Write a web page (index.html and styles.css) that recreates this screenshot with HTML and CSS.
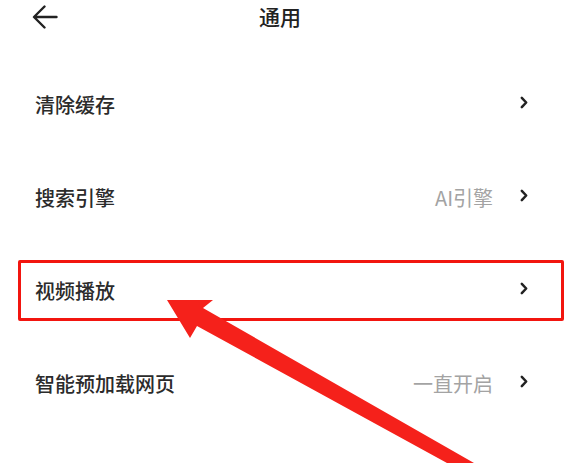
FILE: index.html
```html
<!DOCTYPE html>
<html lang="zh-CN">
<head>
<meta charset="utf-8">
<title>通用</title>
<link rel="stylesheet" href="styles.css">
</head>
<body>
<div class="page">
  <header class="header">
    <svg class="back" width="26" height="24" viewBox="0 0 26 24">
      <path d="M24.5 12H2.5M12.5 1.5L2 12l10.5 10.5" fill="none" stroke="#222" stroke-width="2.4" stroke-linecap="round" stroke-linejoin="round"/>
    </svg>
    <h1 class="title">通用</h1>
  </header>
  <ul class="list">
    <li class="row">
      <span class="label">清除缓存</span>
      <span class="right">
        <svg class="chev" width="8" height="13" viewBox="0 0 8 13"><path d="M1.8 1.8L6.2 6.5 1.8 11.2" fill="none" stroke="#222" stroke-width="2.5" stroke-linecap="round" stroke-linejoin="round"/></svg>
      </span>
    </li>
    <li class="row">
      <span class="label">搜索引擎</span>
      <span class="right">
        <span class="value">AI引擎</span>
        <svg class="chev" width="8" height="13" viewBox="0 0 8 13"><path d="M1.8 1.8L6.2 6.5 1.8 11.2" fill="none" stroke="#222" stroke-width="2.5" stroke-linecap="round" stroke-linejoin="round"/></svg>
      </span>
    </li>
    <li class="row highlighted">
      <span class="label">视频播放</span>
      <span class="right">
        <svg class="chev" width="8" height="13" viewBox="0 0 8 13"><path d="M1.8 1.8L6.2 6.5 1.8 11.2" fill="none" stroke="#222" stroke-width="2.5" stroke-linecap="round" stroke-linejoin="round"/></svg>
      </span>
      <span class="mark-box"></span>
    </li>
    <li class="row">
      <span class="label">智能预加载网页</span>
      <span class="right">
        <span class="value">一直开启</span>
        <svg class="chev" width="8" height="13" viewBox="0 0 8 13"><path d="M1.8 1.8L6.2 6.5 1.8 11.2" fill="none" stroke="#222" stroke-width="2.5" stroke-linecap="round" stroke-linejoin="round"/></svg>
      </span>
    </li>
  </ul>
  <svg class="pointer" width="578" height="463" viewBox="0 0 578 463">
    <polygon points="167,300 213,300 203,308 474,463 447,463 197,326 190,338" fill="#f5211b"/>
  </svg>
</div>
</body>
</html>
```

FILE: styles.css
```css
html, body {
  margin: 0;
  padding: 0;
  background: #ffffff;
}

.page {
  position: relative;
  width: 578px;
  height: 463px;
  overflow: hidden;
  font-family: "Noto Sans CJK SC", "Noto Sans", sans-serif;
  color: #2e2e2e;
}

.header {
  height: 36px;
  display: flex;
  align-items: center;
  justify-content: center;
  position: relative;
  padding-right: 18px;
  box-sizing: border-box;
  padding-bottom: 4px;
}

.back {
  position: absolute;
  left: 32px;
  top: 5px;
}

.title {
  margin: 0;
  font-size: 21px;
  font-weight: 500;
  line-height: 1;
  color: #222;
}

.list {
  list-style: none;
  margin: 22px 0 0;
  padding: 0;
}

.row {
  position: relative;
  height: 93px;
  display: flex;
  align-items: center;
  justify-content: space-between;
  padding: 0 50px 0 35px;
}

.label {
  font-size: 20px;
  font-weight: 500;
  color: #2b2b2b;
}

.right {
  display: flex;
  align-items: center;
  gap: 27px;
}

.value {
  font-size: 20px;
  color: #a3a3a3;
}

.chev {
  display: block;
  margin-top: -4px;
}

.mark-box {
  position: absolute;
  left: 18px;
  right: 14px;
  top: 16px;
  bottom: 16px;
  border: 3px solid #f2150f;
  border-radius: 2px;
}

.pointer {
  position: absolute;
  left: 0;
  top: 0;
  pointer-events: none;
}
```
